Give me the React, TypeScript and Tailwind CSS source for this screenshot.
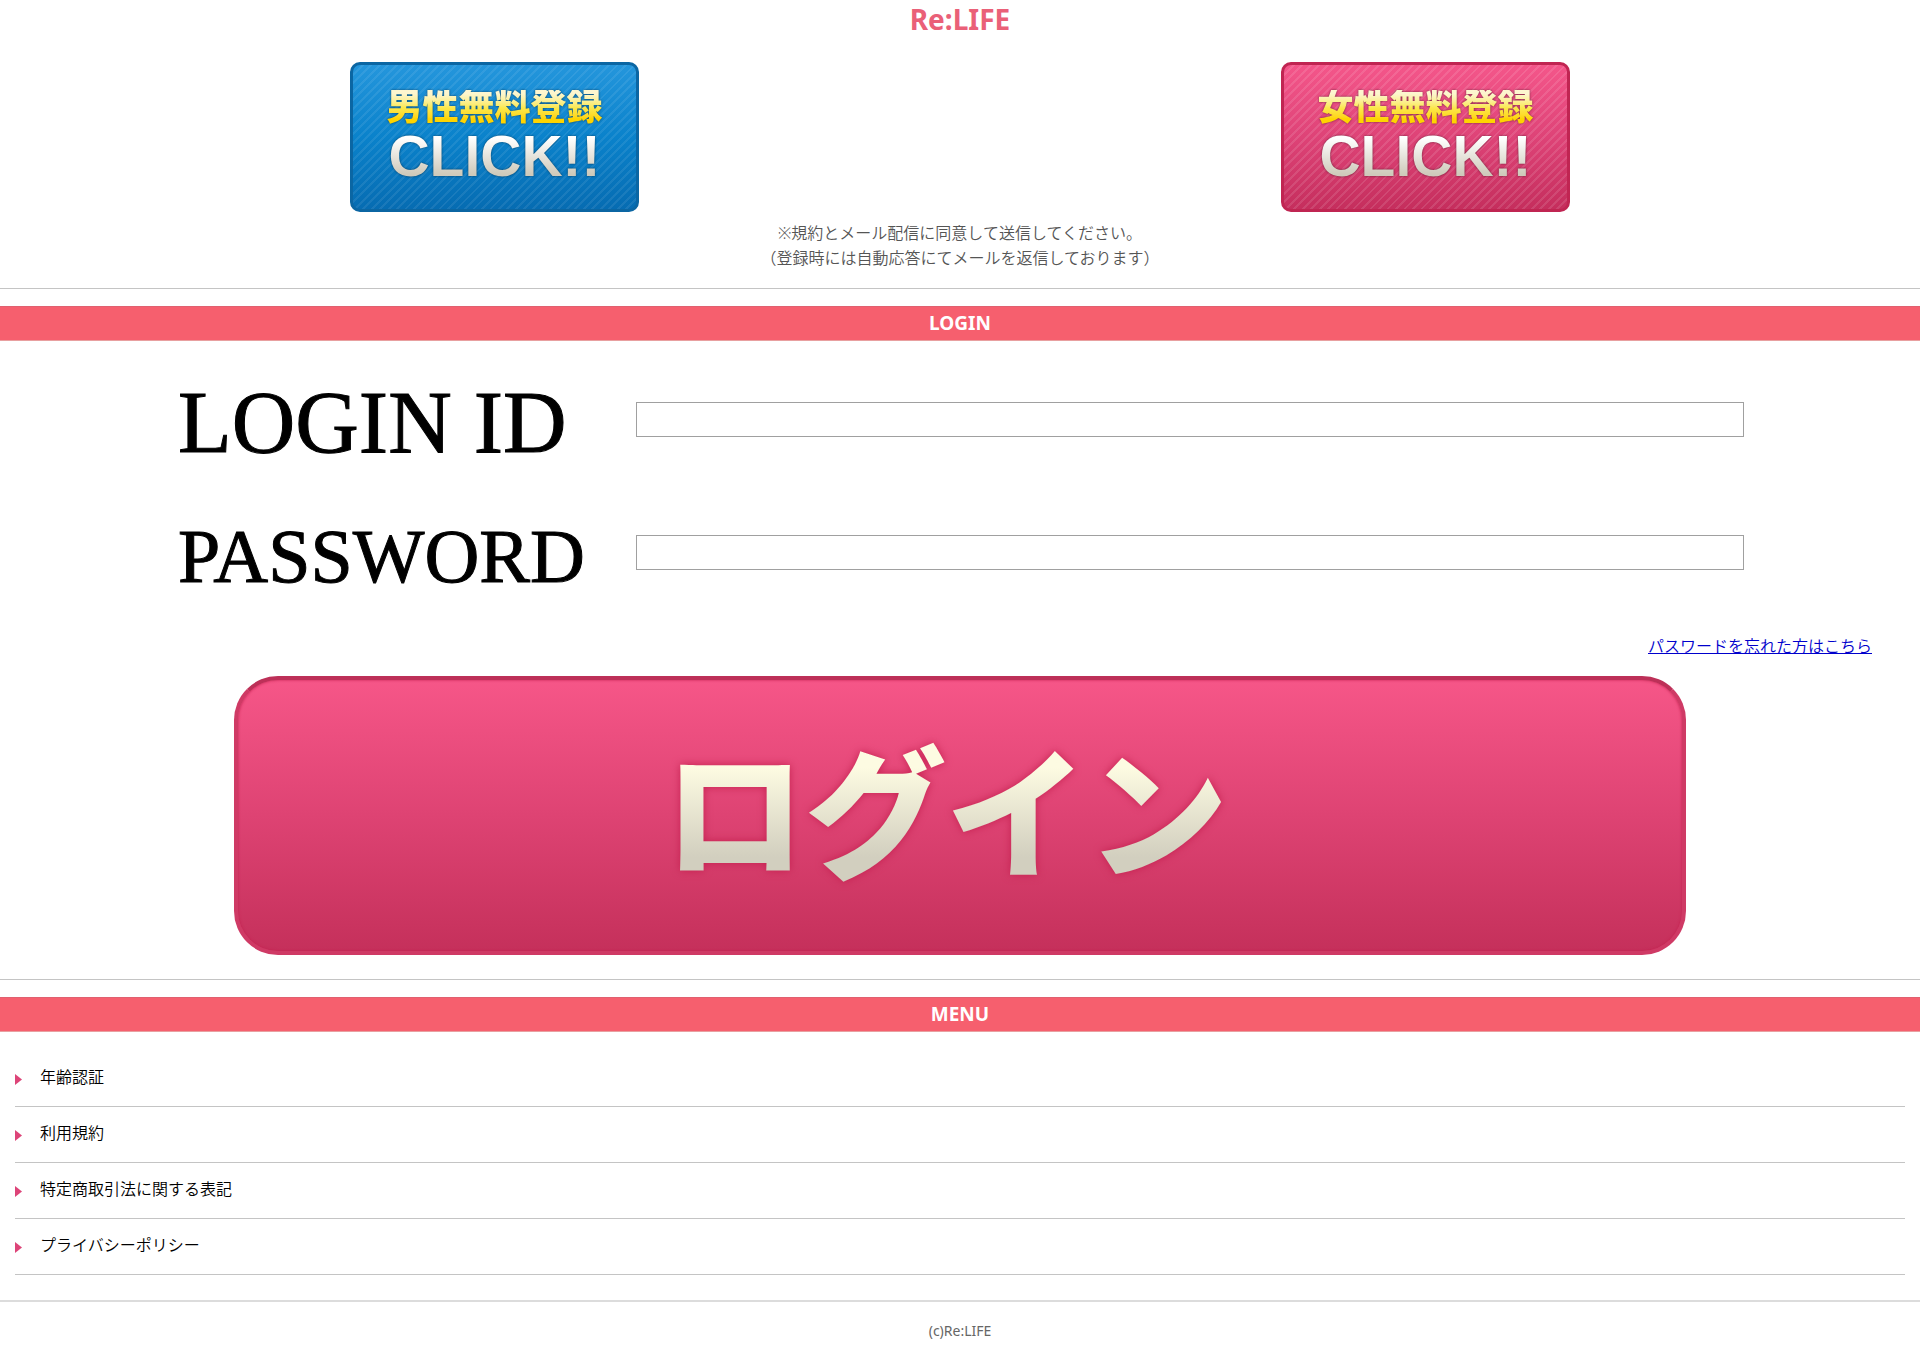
import React from 'react';
import clsx from 'clsx';

interface RegisterLinkProps {
  label: string;
  variant: 'male' | 'female';
}

const variants = {
  male: 'border-[#0b66a3] bg-[repeating-linear-gradient(135deg,#ffffff14_0_2px,transparent_2px_6px),linear-gradient(#2496dc,#0a82cb_50%,#066cb2)]',
  female: 'border-[#c02552] bg-[repeating-linear-gradient(135deg,#ffffff1c_0_2px,transparent_2px_6px),linear-gradient(#f4568a,#de4377_50%,#c52e5d)]',
};

const RegisterLink: React.FC<RegisterLinkProps> = ({ label, variant }) => (
  <a
    href="#register"
    className={clsx(
      'flex h-[150px] w-[289px] flex-col items-center rounded-[10px] border-3 pt-[25px] font-bold',
      variants[variant],
    )}
  >
    <span className="bg-linear-to-b from-[#fdf6cf] from-10% via-[#fbe84a] via-50% to-[#ffd400] to-80% bg-clip-text font-['Liberation_Sans','Noto_Sans_CJK_JP',sans-serif] text-[36px] leading-[36px] font-black text-transparent drop-shadow-[0_0_1px_#00000080]">
      {label}
    </span>
    <span className="bg-linear-to-b from-white from-20% to-[#cfcabb] to-80% bg-clip-text font-['Liberation_Sans',sans-serif] text-[57px] leading-[60px] text-transparent drop-shadow-[0_0_1px_#00000080]">
      CLICK!!
    </span>
  </a>
);

const SectionTitle: React.FC<{ children: React.ReactNode }> = ({ children }) => (
  <h2 className="mt-[17px] h-[35px] border-y border-t-[#e0606f] border-b-[#e8a0a0] bg-[#f65f6e] text-center text-[19px] leading-[32px] font-bold text-white">
    {children}
  </h2>
);

const menuItems = ['年齢認証', '利用規約', '特定商取引法に関する表記', 'プライバシーポリシー'];

const inputClass = 'h-[35px] w-full border border-[#a0a0a0] bg-white px-2 text-base outline-none';
const labelClass =
  "pt-1.5 pl-0.5 font-['Liberation_Serif',serif] leading-none text-black [-webkit-text-stroke:1px_black]";

export default function App() {
  return (
    <div className="bg-white font-['Noto_Sans','Noto_Sans_CJK_JP',sans-serif] text-base leading-[25px] font-[350] text-black">
      <header>
        <h1 className="text-center text-[28px] leading-[38px] font-bold text-[#ea6078]">Re:LIFE</h1>
        <div className="mt-6 grid grid-cols-2 justify-items-center px-[29px]">
          <RegisterLink label="男性無料登録" variant="male" />
          <RegisterLink label="女性無料登録" variant="female" />
        </div>
        <p className="mt-[9px] text-center text-[#555]">
          ※規約とメール配信に同意して送信してください。
          <br />
          （登録時には自動応答にてメールを返信しております）
        </p>
        <hr className="mt-[17px] border-[#c4c4c4]" />
      </header>

      <main>
        <SectionTitle>LOGIN</SectionTitle>
        <form className="pt-3" onSubmit={(e) => e.preventDefault()}>
          <div className="grid auto-rows-[133px] grid-cols-[460px_1fr] items-center px-44">
            <label htmlFor="login-id" className={clsx(labelClass, 'text-[88px]')}>LOGIN ID</label>
            <input id="login-id" type="text" className={inputClass} />
            <label htmlFor="password" className={clsx(labelClass, 'text-[76px]')}>PASSWORD</label>
            <input id="password" type="password" className={inputClass} />
          </div>
          <p className="mt-[15px] pr-12 text-right">
            <a href="#reminder" className="text-[#0000cc] underline">パスワードを忘れた方はこちら</a>
          </p>
          <div className="mt-[17px] px-[234px]">
            <button
              type="submit"
              className="flex h-[279px] w-full items-center justify-center rounded-[44px] border-4 border-[#cf3a65] border-t-[#bd3058] bg-linear-to-b from-[#f65688] via-[#de4373] to-[#c5305b] pr-7 pb-2 shadow-[inset_0_0_3px_#c4204f]"
            >
              <span className="bg-linear-to-b from-[#fdfbe2] from-25% to-[#d2cfbf] to-75% bg-clip-text text-[141px] leading-[180px] font-black text-transparent drop-shadow-[0_0_4px_#c4204f]">
                ログイン
              </span>
            </button>
          </div>
        </form>
        <hr className="mt-6 border-[#c4c4c4]" />

        <SectionTitle>MENU</SectionTitle>
        <ul className="mt-[19px] px-[15px]">
          {menuItems.map((item) => (
            <li key={item} className="h-14 border-b border-[#c4c4c4]">
              <a href="#menu" className="flex h-[53px] items-center">
                <svg className="mt-[3px] mr-[18px] h-[11px] w-[7px]" viewBox="0 0 7 11" fill="#dd4478">
                  <path d="M0 0L7 5.5L0 11Z" />
                </svg>
                {item}
              </a>
            </li>
          ))}
        </ul>
      </main>

      <footer className="mt-[25px] border-t-2 border-[#dcdcdc] pt-4 pb-2 text-center text-[14px] font-normal text-[#666]">
        (c)Re:LIFE
      </footer>
    </div>
  );
}
